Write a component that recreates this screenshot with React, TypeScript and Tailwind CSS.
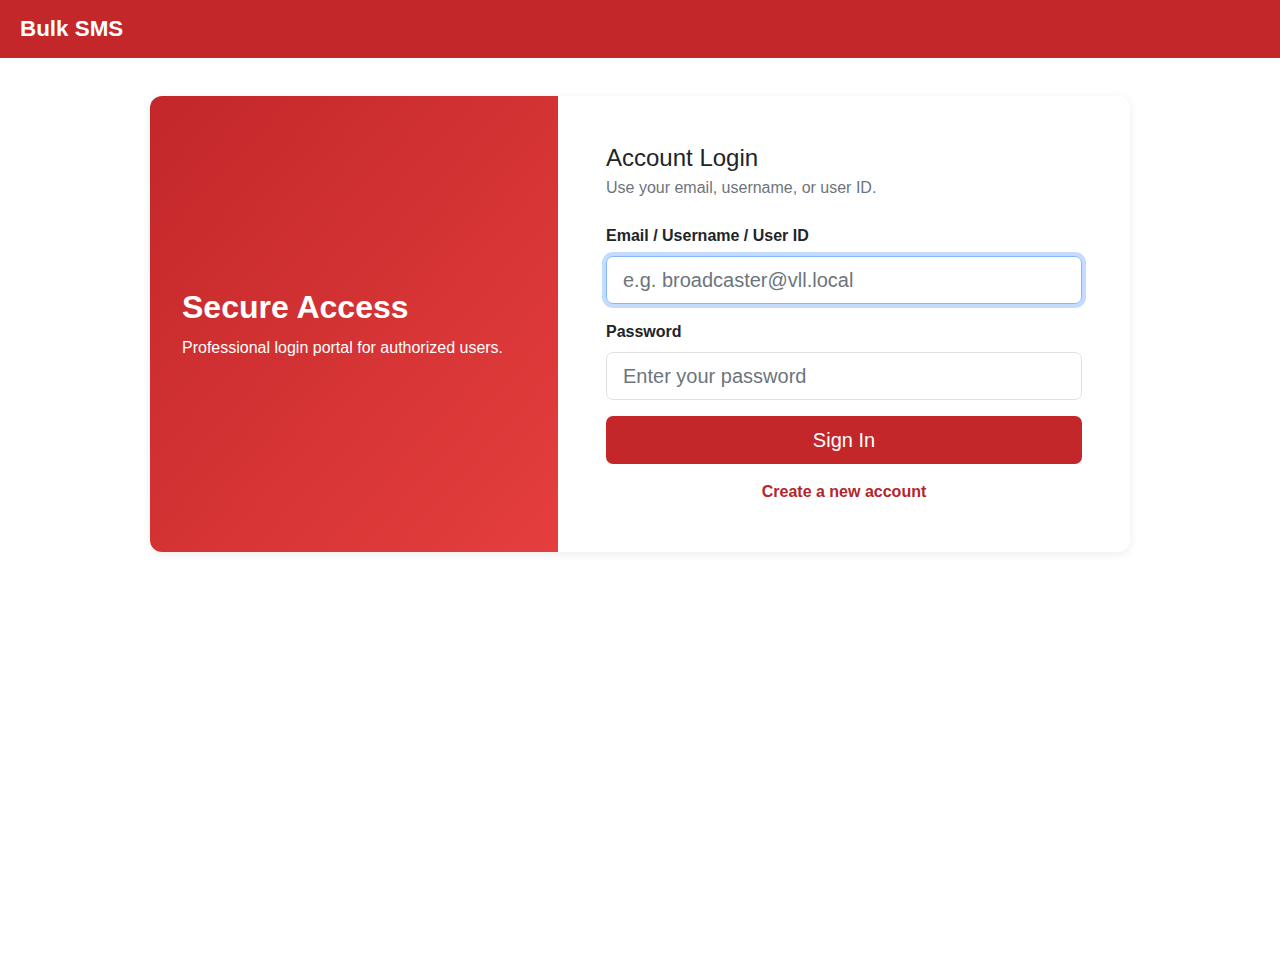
import React from "react";

export default function App() {
  return (
    <div className="min-h-screen bg-white" style={{ fontFamily: '"Liberation Sans", Arial, sans-serif' }}>
      <header className="h-[58px] bg-[#c3272a] flex items-center px-5">
        <span className="text-white font-bold text-[22.4px]">Bulk SMS</span>
      </header>
      <main className="pt-[38px] flex justify-center">
        <div className="w-[980px] flex rounded-[12px] overflow-hidden bg-white shadow-[0_2px_10px_rgba(0,0,0,0.08)]">
          <div className="w-[408px] flex flex-col justify-center px-8 bg-gradient-to-br from-[#c3272a] to-[#e53e3e] text-white">
            <h1 className="text-[32px] font-bold leading-[1.2]">Secure Access</h1>
            <p className="text-[16px] leading-[24px] mt-[10px]">Professional login portal for authorized users.</p>
          </div>
          <div className="flex-1 px-12 pt-[47px] pb-12">
            <h2 className="text-[24px] leading-[29px] text-[#212529]">Account Login</h2>
            <p className="text-[16px] leading-[24px] text-[#6c757d] mt-[4px]">Use your email, username, or user ID.</p>
            <label className="block text-[16px] leading-[24px] font-bold text-[#212529] mt-[24px]">Email / Username / User ID</label>
            <input
              className="mt-[8px] w-full h-[48px] rounded-[7px] border border-[#86b7fe] px-4 text-[20px] text-[#212529] placeholder:text-[#6c757d] outline-none shadow-[0_0_0_4px_rgba(13,110,253,0.25)]"
              placeholder="e.g. broadcaster@vll.local"
            />
            <label className="block text-[16px] leading-[24px] font-bold text-[#212529] mt-[16px]">Password</label>
            <input
              type="password"
              className="mt-[8px] w-full h-[48px] rounded-[7px] border border-[#dee2e6] px-4 text-[20px] text-[#212529] placeholder:text-[#6c757d] outline-none"
              placeholder="Enter your password"
            />
            <button className="mt-[16px] w-full h-[48px] rounded-[7px] bg-[#c3272a] text-white text-[20px]">Sign In</button>
            <div className="mt-[16px] text-center">
              <a href="#" className="text-[16px] leading-[24px] font-bold text-[#b3262a]">Create a new account</a>
            </div>
          </div>
        </div>
      </main>
    </div>
  );
}
